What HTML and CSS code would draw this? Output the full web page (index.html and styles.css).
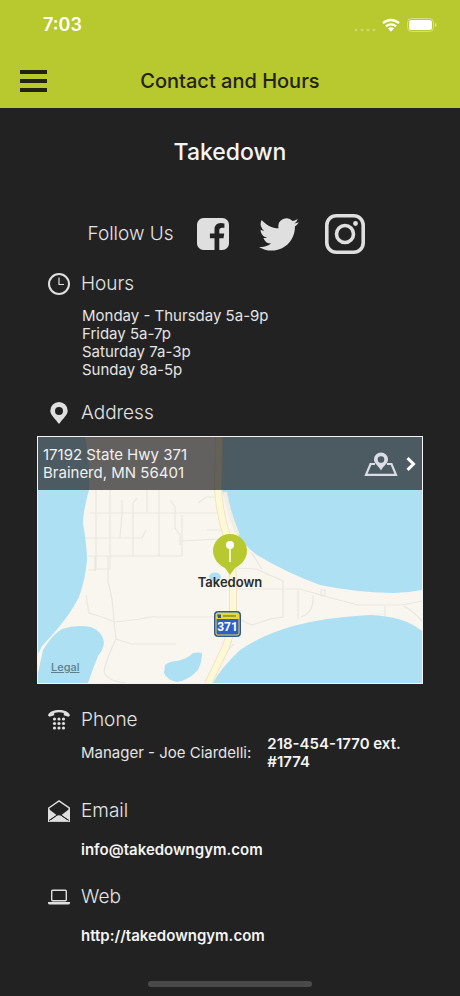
FILE: index.html
```html
<!DOCTYPE html>
<html lang="en">
<head>
    <meta charset="UTF-8">
    <meta name="viewport" content="width=device-width, initial-scale=1">
    <title>Contact and Hours</title>
    <link rel="stylesheet" href="styles.css">
</head>
<body>
    <header class="header">
        <div class="status-bar">
            <span class="time">7:03</span>
            <div class="status-icons">
                <svg width="22" height="4" viewBox="0 0 22 4" fill="#fff" opacity=".3"><circle cx="2" cy="2" r="1.3"/><circle cx="8" cy="2" r="1.3"/><circle cx="14" cy="2" r="1.3"/><circle cx="20" cy="2" r="1.3"/></svg>
                <svg class="wifi" width="18" height="14" viewBox="0 0 18 14" fill="none" stroke="#fff" stroke-width="2.3"><path d="M1 5.2a11.6 11.6 0 0 1 16 0M4 8.3a7.2 7.2 0 0 1 10 0"/><path d="M6 10.6a4.4 4.4 0 0 1 6 0L9 13.8z" fill="#fff" stroke="none"/></svg>
                <svg class="battery" width="30" height="14" viewBox="0 0 30 14"><rect x=".5" y=".5" width="26" height="13" rx="4" fill="none" stroke="#fff" opacity=".4"/><rect x="2" y="2" width="23" height="10" rx="2.5" fill="#fff"/><path d="M28 5v4q1.6-.6 1.6-2T28 5z" fill="#fff" opacity=".5"/></svg>
            </div>
        </div>
        <div class="nav">
            <button class="menu" aria-label="Menu"><span></span><span></span><span></span></button>
            <h1 class="nav-title">Contact and Hours</h1>
        </div>
    </header>

    <main class="content">
        <h2 class="gym-name">Takedown</h2>

        <div class="follow">
            <span>Follow Us</span>
            <a href="#" class="facebook" aria-label="Facebook">
                <svg width="32" height="32" viewBox="0 0 32 32"><path fill="#dfdfe0" d="M6.500 0h19A6.500 6.500 0 0 1 32 6.500v19a6.500 6.500 0 0 1-6.500 6.500h-3.200V20.200h4.200l.7-4.700h-4.900v-3q0-2.800 2.900-2.800h2.200V5.500q-1.800-.4-3.700-.4-6.200 0-6.200 6.500v3.900h-4.600v4.700h4.600V32H6.500A6.500 6.500 0 0 1 0 25.500v-19A6.500 6.500 0 0 1 6.500 0z"/></svg>
            </a>
            <a href="#" class="twitter" aria-label="Twitter">
                <svg width="40" height="33" viewBox="0 2 24 20" preserveAspectRatio="none"><path fill="#dfdfe0" d="M23.950 4.570a10 10 0 0 1-2.820.77 4.960 4.960 0 0 0 2.160-2.720c-.95.550-2 .95-3.130 1.180a4.920 4.920 0 0 0-8.380 4.480C7.690 8.090 4.070 6.130 1.640 3.160a4.920 4.920 0 0 0 1.520 6.570 4.900 4.900 0 0 1-2.230-.61v.06c0 2.380 1.700 4.370 3.950 4.820a5 5 0 0 1-2.210.09 4.940 4.940 0 0 0 4.600 3.420A9.870 9.870 0 0 1 0 19.540a13.940 13.940 0 0 0 7.550 2.210c9.050 0 14-7.500 14-13.980 0-.21 0-.42-.02-.63a9.940 9.940 0 0 0 2.420-2.570z"/></svg>
            </a>
            <a href="#" class="instagram" aria-label="Instagram">
                <svg width="40" height="40" viewBox="0 0 40 40" fill="none" stroke="#dfdfe0" stroke-width="3.6"><rect x="1.8" y="1.8" width="36.4" height="36.4" rx="9.5"/><circle cx="20" cy="20" r="8.5"/><circle cx="30.5" cy="9.5" r="2.4" fill="#dfdfe0" stroke="none"/></svg>
            </a>
        </div>

        <section class="section hours">
            <h3 class="section-title">
                <svg width="22" height="22" viewBox="0 0 22 22" fill="none" stroke="#dfdfe0"><circle cx="11" cy="11" r="10" stroke-width="2"/><path d="M11 4.500V11.500h5" stroke-width="1.2"/></svg>
                Hours
            </h3>
            <p class="hours-list">
                Monday - Thursday 5a-9p<br>
                Friday 5a-7p<br>
                Saturday 7a-3p<br>
                Sunday 8a-5p
            </p>
        </section>

        <section class="section address">
            <h3 class="section-title">
                <svg width="22" height="22" viewBox="0 0 22 22"><path fill="#dfdfe0" fill-rule="evenodd" d="M11 0a8.700 8.700 0 0 1 8.700 8.700c0 4.500-5 8-8.700 13.300C7.300 16.700 2.300 13.200 2.300 8.700A8.700 8.700 0 0 1 11 0zm0 4.900a4 4 0 1 0 0 8 4 4 0 0 0 0-8z"/></svg>
                Address
            </h3>
            <div class="map">
                <svg class="map-canvas" viewBox="0 0 384 246" preserveAspectRatio="xMidYMid slice">
                    <rect width="384" height="246" fill="#f9f6ef"/>
                    <!-- lakes -->
                    <g fill="#ade0f3">
                        <path d="M0 0H47Q53 30 51 53 45 75 45 86 49 110 49 122 48 140 41 160 32 178 15 197L4 209 0 217z"/>
                        <path d="M0 246V236L5 213Q14 198 24 192 38 187 53 190 65 195 66 206 65 213 60 219 55 231 50 246z"/>
                        <path d="M184 0H384V153Q370 156 355 156 315 155 282 148 249 136 219 118 205 108 197 93L184 53z"/>
                        <path d="M175 246Q182 232 202 213 224 198 255 189 289 180 332 178 366 179 384 194V246z"/>
                        <path d="M127 228Q132 224 139 224 149 222 155 216 161 215 164 216 164 225 160 233 151 243 139 245 129 243 126 236z"/>
                        <ellipse cx="177" cy="140" rx="6" ry="4.5"/>
                    </g>
                    <!-- local roads -->
                    <g fill="none" stroke="#eae7e0" stroke-width="1.2">
                        <path d="M58 53V132H72V53M84 63V76L82 100M95 119V66L99 61M109 53V75M121 53V119M132 63L137 70V91L142 98V108M52 76H179M48 101H104L108 93M50 119H144V78M144 104Q160 103 184 102M160 66L168 60H178M169 93H184M57 119V134M70 119V145Q75 160 76 185L78 202Q68 223 66 234 68 244 88 246M48 158L51 176 64 180 77 185 103 182Q113 179 120 180H186M78 202L94 207H138M50 133H58"/>
                        <path d="M197 131 218 132 245 144V180L232 182 214 188 201 182M199 152H262Q285 159 320 168H364L384 164M260 154V182M275 158Q276 176 263 180M347 169V179M366 169Q375 174 384 184M213 115 224 132"/>
                        <path d="M283 153v6h4v-6zM182 220 196 207"/>
                    </g>
                    <!-- highway -->
                    <g fill="none">
                        <path d="M187 55Q191 78 200 98" stroke="#f3eee4" stroke-width="4"/>
                        <path d="M181 0 180 53Q182 78 189 100 195 122 195 150V178Q193 202 183 220L170 247" stroke="#f4e2c4" stroke-width="8"/>
                        <path d="M181 0 180 53Q182 78 189 100 195 122 195 150V178Q193 202 183 220L170 247" stroke="#fdf8d6" stroke-width="6"/>
                    </g>
                    <!-- route shield -->
                    <rect x="176.5" y="174.5" width="26" height="25" rx="3" fill="#2d5fcb" stroke="#34548e"/>
                    <rect x="178" y="176" width="23" height="22" rx="2" fill="#2d5fcb" stroke="#e9d936"/>
                    <path d="M178 182v-4q0-2 2-2h19q2 0 2 2v4z" fill="#e9d936"/>
                    <path d="M179 177.500h4v3.500h-3z" fill="#2f5598"/>
                    <path d="M185 179h13" stroke="#8b8930" stroke-width="1.5"/>
                    <text class="shield-text" x="189.5" y="194">371</text>
                    <!-- pin -->
                    <path d="M192 97a17 17 0 0 1 17 17c0 8-6 14-12 17l-5 7-5-7c-6-3-12-9-12-17a17 17 0 0 1 17-17z" fill="#b8c930"/>
                    <circle cx="192" cy="108" r="4" fill="#fff"/>
                    <path d="M192 110v15" stroke="#fff" stroke-width="1.5"/>
                    <text class="pin-label" x="192" y="150">Takedown</text>
                </svg>
                <a href="#" class="map-bar">
                    <span class="street">17192 State Hwy 371<br>Brainerd, MN 56401</span>
                    <svg width="34" height="24" viewBox="0 0 34 24" fill="none" stroke="#dcdce6"><path d="M11 12H6.500L2 22.800H32L27.500 12H23" stroke-width="2.2"/><path d="M17 .5a7 7 0 0 1 7 7c0 4-4.500 6-7 11-2.500-5-7-7-7-11a7 7 0 0 1 7-7zm0 3.800a3.300 3.300 0 1 0 0 6.600 3.300 3.300 0 0 0 0-6.600z" fill="#dcdce6" fill-rule="evenodd" stroke="none"/></svg>
                    <svg class="chevron" width="10" height="14" viewBox="0 0 10 14" fill="none" stroke="#fff" stroke-width="3"><path d="M1.500 1.200 7.500 7l-6 5.800"/></svg>
                </a>
                <a href="#" class="legal">Legal</a>
            </div>
        </section>

        <section class="section phone">
            <h3 class="section-title">
                <svg width="22" height="20" viewBox="0 0 22 20" fill="#dfdfe0"><path d="M0 5.500C1 1.500 6 0 11 0s10 1.500 11 5.500l-1.500 1.200-4.700-1.500V2.900Q11 1.600 6.200 2.900v2.300L1.500 6.700z"/><g><circle cx="6.500" cy="9" r="1.600"/><circle cx="11" cy="9" r="1.600"/><circle cx="15.500" cy="9" r="1.600"/><circle cx="6.500" cy="13.500" r="1.600"/><circle cx="11" cy="13.500" r="1.600"/><circle cx="15.500" cy="13.500" r="1.600"/><circle cx="6.500" cy="18" r="1.600"/><circle cx="11" cy="18" r="1.600"/><circle cx="15.500" cy="18" r="1.600"/></g></svg>
                Phone
            </h3>
            <div class="phone-row">
                <span>Manager - Joe Ciardelli:</span>
                <a href="tel:2184541770">218-454-1770 ext. #1774</a>
            </div>
        </section>

        <section class="section email">
            <h3 class="section-title">
                <svg width="22" height="22" viewBox="0 0 22 22"><path d="M.8 8 11 1l10.200 7v13H.8z" fill="none" stroke="#dfdfe0" stroke-width="1.5"/><path d="M0 8.500 8.500 15 1 20.500V22h20v-1.500L13.500 15 22 8.500V22H0z" fill="#dfdfe0"/><path d="M1 21.500 8.300 16Q11 14.500 13.700 16l7.300 5.500z" fill="#dfdfe0"/><path d="M1 20.500 9 15.200M21 20.500 13 15.200" stroke="#222" stroke-width="1"/></svg>
                Email
            </h3>
            <a class="contact-link" href="mailto:info@takedowngym.com">info@takedowngym.com</a>
        </section>

        <section class="section web">
            <h3 class="section-title">
                <svg width="22" height="16" viewBox="0 0 22 16"><rect x="3.7" y="1.2" width="14.6" height="10.6" rx="1" fill="none" stroke="#dfdfe0" stroke-width="1.4"/><path d="M0 13h22v1q0 1.500-2 1.500H2q-2 0-2-1.500z" fill="#dfdfe0"/></svg>
                Web
            </h3>
            <a class="contact-link" href="http://takedowngym.com">http://takedowngym.com</a>
        </section>
    </main>
    <div class="home-indicator"></div>
</body>
</html>
```
FILE: styles.css
```css
* {
    box-sizing: border-box;
}
body {
    margin: 0;
    min-height: 100vh;
    display: flex;
    flex-direction: column;
    background: #222;
    color: #e4e4e4;
    font-family: Inter, 'Liberation Sans', sans-serif;
    font-size: 15px;
    line-height: 18px;
}
h1, h2, h3, p {
    margin: 0;
}
a {
    color: inherit;
    text-decoration: none;
}
svg {
    display: block;
    flex: none;
}
.header {
    height: 108px;
    background: #b8c930;
}
.status-bar {
    height: 54px;
    padding: 0 23px 4px 43px;
    display: flex;
    justify-content: space-between;
    align-items: center;
    color: #fff;
}
.time {
    font-size: 18px;
    font-weight: 600;
}
.status-icons {
    display: flex;
    align-items: center;
    gap: 6px;
}
.status-icons svg:first-child {
    margin-top: 10px;
}
.battery {
    margin-left: 1px;
}
.nav {
    height: 54px;
    padding: 0 20px;
    display: grid;
    grid-template-columns: 27px 1fr 27px;
    align-items: center;
}
.menu {
    width: 27px;
    padding: 0;
    border: 0;
    background: none;
    display: flex;
    flex-direction: column;
    gap: 5px;
}
.menu span {
    height: 4px;
    background: #222214;
}
.nav-title {
    color: #222214;
    font-size: 20px;
    line-height: 28px;
    font-weight: 500;
    text-align: center;
}
.content {
    flex: 1;
    padding: 29px 37px 44px;
}
.gym-name {
    color: #f4f4f4;
    font-size: 23px;
    line-height: 30px;
    font-weight: 500;
    text-align: center;
}
.follow {
    margin-top: 47px;
    padding-right: 8px;
    display: flex;
    align-items: center;
    justify-content: center;
    font-size: 19px;
    font-weight: 300;
}
.facebook {
    margin-left: 23px;
}
.twitter {
    margin-left: 30px;
}
.instagram {
    margin-left: 26px;
}
.section-title {
    padding-left: 11px;
    display: flex;
    align-items: center;
    gap: 11px;
    font-size: 19px;
    line-height: 24px;
    font-weight: 300;
}
.hours {
    margin-top: 18px;
}
.hours-list {
    margin: 11px 0 0 45px;
}
.address {
    margin-top: 22px;
}
.map {
    position: relative;
    height: 248px;
    margin-top: 11px;
    border: 1px solid #f4f4f4;
    overflow: hidden;
}
.map-canvas {
    width: 100%;
    height: 100%;
}
.pin-label {
    font-size: 13px;
    font-weight: 600;
    fill: #2b2b2b;
    text-anchor: middle;
}
.shield-text {
    font-family: Roboto, sans-serif;
    font-size: 12px;
    font-weight: 700;
    fill: #fff;
    text-anchor: middle;
}
.map-bar {
    position: absolute;
    top: 0;
    left: 0;
    right: 0;
    height: 53px;
    padding: 0 6px 0 5px;
    display: flex;
    align-items: center;
    background: rgba(34, 34, 34, 0.7);
    color: #f0f0f0;
}
.street {
    flex: 1;
}
.chevron {
    margin-left: 8px;
}
.legal {
    position: absolute;
    left: 13px;
    bottom: 7px;
    font-size: 11px;
    font-weight: 500;
    color: #5e7f8c;
    text-decoration: underline;
}
.phone {
    margin-top: 24px;
}
.phone-row {
    margin-top: 3px;
    padding-left: 44px;
    display: grid;
    grid-template-columns: auto 1fr;
    column-gap: 16px;
    align-items: center;
}
.phone-row span {
    white-space: nowrap;
}
.phone-row a,
.contact-link {
    color: #f4f4f4;
    font-weight: 600;
}
.email {
    margin-top: 28px;
}
.contact-link {
    display: block;
    width: fit-content;
    margin: 18px 0 0 44px;
}
.web {
    margin-top: 26px;
}
.home-indicator {
    position: fixed;
    bottom: 9px;
    left: 50%;
    width: 164px;
    height: 6px;
    margin-left: -82px;
    border-radius: 3px;
    background: #4a4a4a;
}
```
